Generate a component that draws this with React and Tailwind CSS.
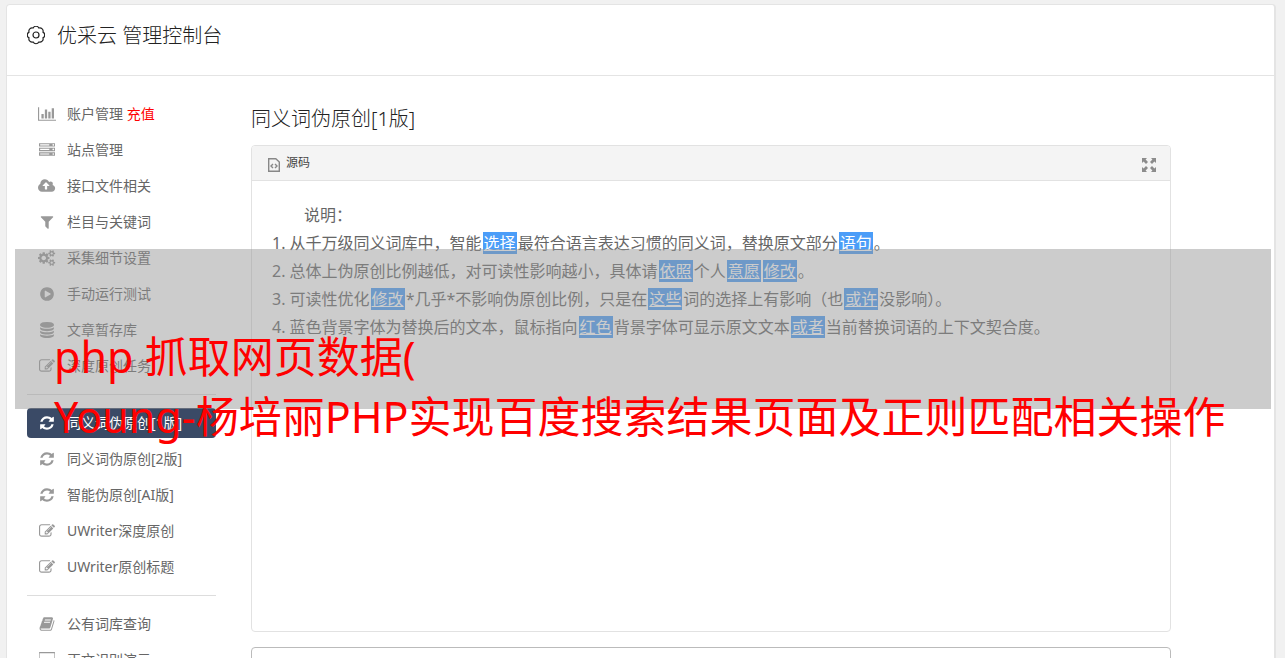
const icons = {
  chart: {
    width: 2048,
    d: "M640 896v512h-256v-512h256zm384-512v1024h-256v-1024h256zm1024 1152v128h-2048v-1536h128v1408h1920zm-640-896v768h-256v-768h256zm384-384v1152h-256v-1152h256z",
  },
  server: {
    width: 1792,
    d: "M128 1408h1024v-128h-1024v128zm0-512h1024v-128h-1024v128zm1568 448q0-40-28-68t-68-28-68 28-28 68 28 68 68 28 68-28 28-68zm-1568-960h1024v-128h-1024v128zm1568 448q0-40-28-68t-68-28-68 28-28 68 28 68 68 28 68-28 28-68zm0-512q0-40-28-68t-68-28-68 28-28 68 28 68 68 28 68-28 28-68zm96 832v384h-1792v-384h1792zm0-512v384h-1792v-384h1792zm0-512v384h-1792v-384h1792z",
  },
  upload: {
    width: 1920,
    d: "M1280 864q0-14-9-23l-352-352q-9-9-23-9t-23 9l-351 351q-10 12-10 24 0 14 9 23t23 9h224v352q0 13 9.5 22.5t22.5 9.5h192q13 0 22.5-9.5t9.5-22.5v-352h224q13 0 22.5-9.5t9.5-22.5zm640 288q0 159-112.5 271.5t-271.5 112.5h-1088q-185 0-316.5-131.5t-131.5-316.5q0-130 70-240t188-165q-2-30-2-43 0-212 150-362t362-150q156 0 285.5 87t188.5 231q71-62 166-62 106 0 181 75t75 181q0 76-41 138 130 31 213.5 135.5t83.5 238.5z",
  },
  filter: {
    width: 1792,
    d: "M1595 295q17 41-14 70l-493 493v742q0 42-39 59-13 5-25 5-27 0-45-19l-256-256q-19-19-19-45v-486l-493-493q-31-29-14-70 17-39 59-39h1280q42 0 59 39z",
  },
  cogs: {
    width: 1920,
    d: "M896 896q0-106-75-181t-181-75-181 75-75 181 75 181 181 75 181-75 75-181zm768 512q0-52-38-90t-90-38-90 38-38 90q0 53 37.5 90.5t90.5 37.5 90.5-37.5 37.5-90.5zm0-1024q0-52-38-90t-90-38-90 38-38 90q0 53 37.5 90.5t90.5 37.5 90.5-37.5 37.5-90.5zm-384 421v185q0 10-7 19.5t-16 10.5l-155 24q-11 35-32 76 34 48 90 115 7 11 7 20 0 12-7 19-23 30-82.5 89.5t-78.5 59.5q-11 0-21-7l-115-90q-37 19-77 31-11 108-23 155-7 24-30 24h-186q-11 0-20-7.5t-10-17.5l-23-153q-34-10-75-31l-118 89q-7 7-20 7-11 0-21-8-144-133-144-160 0-9 7-19 10-14 41-53t47-61q-23-44-35-82l-152-24q-10-1-17-9.5t-7-19.5v-185q0-10 7-19.5t16-10.5l155-24q11-35 32-76-34-48-90-115-7-11-7-20 0-12 7-20 22-30 82-89t79-59q11 0 21 7l115 90q34-18 77-32 11-108 23-154 7-24 30-24h186q11 0 20 7.5t10 17.5l23 153q34 10 75 31l118-89q8-7 20-7 11 0 21 8 144 133 144 160 0 8-7 19-12 16-42 54t-45 60q23 48 34 82l152 23q10 2 17 10.5t7 19.5zm640 533v140q0 16-149 31-12 27-30 52 51 113 51 138 0 4-4 7-122 71-124 71-8 0-46-47t-52-68q-20 2-30 2t-30-2q-14 21-52 68t-46 47q-2 0-124-71-4-3-4-7 0-25 51-138-18-25-30-52-149-15-149-31v-140q0-16 149-31 13-29 30-52-51-113-51-138 0-4 4-7 4-2 35-20t59-34 30-16q8 0 46 46.5t52 67.5q20-2 30-2t30 2q51-71 92-112l6-2q4 0 124 70 4 3 4 7 0 25-51 138 17 23 30 52 149 15 149 31zm0-1024v140q0 16-149 31-12 27-30 52 51 113 51 138 0 4-4 7-122 71-124 71-8 0-46-47t-52-68q-20 2-30 2t-30-2q-14 21-52 68t-46 47q-2 0-124-71-4-3-4-7 0-25 51-138-18-25-30-52-149-15-149-31v-140q0-16 149-31 13-29 30-52-51-113-51-138 0-4 4-7 4-2 35-20t59-34 30-16q8 0 46 46.5t52 67.5q20-2 30-2t30 2q51-71 92-112l6-2q4 0 124 70 4 3 4 7 0 25-51 138 17 23 30 52 149 15 149 31z",
  },
  play: {
    width: 1792,
    d: "M896 128q209 0 385.5 103t279.5 279.5 103 385.5-103 385.5-279.5 279.5-385.5 103-385.5-103-279.5-279.5-103-385.5 103-385.5 279.5-279.5 385.5-103zm384 823q32-18 32-55t-32-55l-544-320q-31-19-64-1-32 19-32 56v640q0 37 32 56 16 8 32 8 17 0 32-9z",
  },
  database: {
    width: 1792,
    d: "M896 768q237 0 443-43t325-127v170q0 69-103 128t-280 93.5-385 34.5-385-34.5-280-93.5-103-128v-170q119 84 325 127t443 43zm0 768q237 0 443-43t325-127v170q0 69-103 128t-280 93.5-385 34.5-385-34.5-280-93.5-103-128v-170q119 84 325 127t443 43zm0-384q237 0 443-43t325-127v170q0 69-103 128t-280 93.5-385 34.5-385-34.5-280-93.5-103-128v-170q119 84 325 127t443 43zm0-1152q208 0 385 34.5t280 93.5 103 128v128q0 69-103 128t-280 93.5-385 34.5-385-34.5-280-93.5-103-128v-128q0-69 103-128t280-93.5 385-34.5z",
  },
  edit: {
    width: 1792,
    d: "M888 1184l116-116-152-152-116 116v56h96v96h56zm440-720q-16-16-33 1l-350 350q-17 17-1 33t33-1l350-350q17-17 1-33zm80 594v190q0 119-84.5 203.5t-203.5 84.5h-832q-119 0-203.5-84.5t-84.5-203.5v-832q0-119 84.5-203.5t203.5-84.5h832q63 0 117 25 15 7 18 23 3 17-9 29l-49 49q-14 14-32 8-23-6-45-6h-832q-66 0-113 47t-47 113v832q0 66 47 113t113 47h832q66 0 113-47t47-113v-126q0-13 9-22l64-64q15-15 35-7t20 29zm-96-738l288 288-672 672h-288v-288zm444 132l-92 92-288-288 92-92q28-28 68-28t68 28l152 152q28 28 28 68t-28 68z",
  },
  refresh: {
    width: 1792,
    d: "M1639 1056q0 5-1 7-64 268-268 434.5t-478 166.5q-146 0-282.5-55t-243.5-157l-129 129q-19 19-45 19t-45-19-19-45v-448q0-26 19-45t45-19h448q26 0 45 19t19 45-19 45l-137 137q71 66 161 102t187 36q134 0 250-65t186-179q11-17 53-117 8-23 30-23h192q13 0 22.5 9.5t9.5 22.5zm25-800v448q0 26-19 45t-45 19h-448q-26 0-45-19t-19-45 19-45l138-138q-148-137-349-137-134 0-250 65t-186 179q-11 17-53 117-8 23-30 23h-199q-13 0-22.5-9.5t-9.5-22.5v-7q65-268 270-434.5t480-166.5q146 0 284 55.5t245 156.5l130-129q19-19 45-19t45 19 19 45z",
  },
  book: {
    width: 1792,
    d: "M1703 478q40 57 18 129l-275 906q-19 64-76.5 107.5t-122.5 43.5h-923q-77 0-148.5-53.5t-99.5-131.5q-24-67-2-127 0-4 3-27t4-37q1-8-3-21.5t-3-19.5q2-11 8-21t16.5-23.5 16.5-23.5q23-38 45-91.5t30-91.5q3-10 .5-30t-.5-28q3-11 17-28t17-23q21-36 42-92t25-90q1-9-2.5-32t.5-28q4-13 22-30.5t22-22.5q19-26 42.5-84.5t27.5-96.5q1-8-3-25.5t-2-26.5q2-8 9-18t18-23 17-21q8-12 16.5-30.5t15-35 16-36 19.5-32 26.5-23.5 36-11.5 47.5 5.5l-1 3q38-9 51-9h761q74 0 114 56t18 130l-274 906q-36 119-71.5 153.5t-128.5 34.5h-869q-27 0-38 15-11 16-1 43 24 70 144 70h923q29 0 56-15.5t35-41.5l300-987q7-22 5-57 38 15 59 43zm-1064 2q-4 13 2 22.5t20 9.5h608q13 0 25.5-9.5t16.5-22.5l21-64q4-13-2-22.5t-20-9.5h-608q-13 0-25.5 9.5t-16.5 22.5zm-83 256q-4 13 2 22.5t20 9.5h608q13 0 25.5-9.5t16.5-22.5l21-64q4-13-2-22.5t-20-9.5h-608q-13 0-25.5 9.5t-16.5 22.5z",
  },
  desktop: {
    width: 1856,
    d: "M1728 992v-832q0-13-9.5-22.5t-22.5-9.5h-1600q-13 0-22.5 9.5t-9.5 22.5v832q0 13 9.5 22.5t22.5 9.5h1600q13 0 22.5-9.5t9.5-22.5zm128-832v1088q0 66-47 113t-113 47h-544q0 37 16 77.5t32 71 16 43.5q0 26-19 45t-45 19h-512q-26 0-45-19t-19-45q0-14 16-44t32-70 16-78h-544q-66 0-113-47t-47-113v-1088q0-66 47-113t113-47h1600q66 0 113 47t47 113z",
  },
};

const menu = [
  [
    { icon: "chart", label: "账户管理", extra: "充值" },
    { icon: "server", label: "站点管理" },
    { icon: "upload", label: "接口文件相关" },
    { icon: "filter", label: "栏目与关键词" },
    { icon: "cogs", label: "采集细节设置" },
    { icon: "play", label: "手动运行测试" },
    { icon: "database", label: "文章暂存库" },
    { icon: "edit", label: "深度原创任务" },
  ],
  [
    { icon: "refresh", label: "同义词伪原创[1版]", active: true },
    { icon: "refresh", label: "同义词伪原创[2版]" },
    { icon: "refresh", label: "智能伪原创[AI版]" },
    { icon: "edit", label: "UWriter深度原创" },
    { icon: "edit", label: "UWriter原创标题" },
  ],
  [
    { icon: "book", label: "公有词库查询" },
    { icon: "desktop", label: "正文识别演示" },
  ],
];

function MenuIcon({ name }) {
  const { width, d } = icons[name];
  return (
    <svg viewBox={`0 0 ${width} 1792`} className="h-4 w-auto" fill="currentColor" aria-hidden="true">
      <path d={d} />
    </svg>
  );
}

function MenuItem({ icon, label, extra, active }) {
  return (
    <a
      href="#"
      className={`flex h-[30px] items-center rounded-sm pl-2.5 text-sm ${active ? 'bg-[#3a4a66] text-white' : 'text-[#666]'}`}
    >
      <span className={`mr-2.5 flex w-5 shrink-0 justify-center ${active ? 'text-white' : 'text-[#999]'}`}>
        <MenuIcon name={icon} />
      </span>
      <span>{label}{extra ? <span className="text-[#f00]"> {extra}</span> : null}</span>
    </a>
  );
}

function Word({ children }) {
  return <a href="#" className="mx-px bg-[#4b9df8] px-px text-white underline">{children}</a>;
}

function Editor() {
  return (
    <section className="h-[487px] overflow-hidden rounded border border-[#e2e2e2] bg-white">
      <div className="flex h-[35px] items-center justify-between border-b border-[#e2e2e2] bg-[#f4f4f4] pr-3.5 pl-4">
        <button className="flex items-center gap-1.5 text-xs text-[#444]">
          <svg viewBox="0 0 12 14" className="mt-1 h-3.5 w-3" fill="none" stroke="#888" aria-hidden="true">
            <path d="M.7.7h7.1L11.3 4v9.3H.7z" strokeWidth="1.4" />
            <path d="M5 6 3 8l2 2M7 6l2 2-2 2" strokeWidth="1.4" />
          </svg>
          源码
        </button>
        <button aria-label="全屏">
          <svg viewBox="0 0 14 14" className="mt-1 size-3.5" fill="#8c8c8c" aria-hidden="true">
            <path d="M0 0h5L3.6 1.6 6 4 4 6 1.6 3.6 0 5zM14 0v5l-1.6-1.4L10 6 8 4l2.4-2.4L9 0zM0 14V9l1.6 1.4L4 8l2 2-2.4 2.4L5 14zM14 14H9l1.4-1.6L8 10l2-2 2.4 2.4L14 9z" />
          </svg>
        </button>
      </div>
      <div className="px-5 py-5 text-base leading-7 text-[#666]">
        <p className="indent-8">说明：</p>
        <p>1. 从千万级同义词库中，智能<Word>选择</Word>最符合语言表达习惯的同义词，替换原文部分<Word>语句</Word>。</p>
        <p>2. 总体上伪原创比例越低，对可读性影响越小，具体请<Word>依照</Word>个人<Word>意愿</Word><Word>修改</Word>。</p>
        <p>3. 可读性优化<Word>修改</Word>*几乎*不影响伪原创比例，只是在<Word>这些</Word>词的选择上有影响（也<Word>或许</Word>没影响）。</p>
        <p>4. 蓝色背景字体为替换后的文本，鼠标指向<Word>红色</Word>背景字体可显示原文文本<Word>或者</Word>当前替换词语的上下文契合度。</p>
      </div>
    </section>
  );
}

export default function App() {
  return (
    <div className="relative h-screen overflow-hidden bg-[#f1f1f1] pt-1 pr-[9px] pl-1.5 font-['Noto_Sans','Noto_Sans_CJK_SC',sans-serif]">
      <div className="rounded-t border border-r-2 border-[#e4e4e4] bg-white">
        <header className="flex h-[71px] items-center gap-3 border-b border-[#e4e4e4] px-5 pb-2 text-[#222]">
          <svg viewBox="1 1 18 20" className="h-5 w-[18px]" fill="none" stroke="currentColor" strokeWidth="1.2" aria-hidden="true">
            <path d="M7.1 3A3.3 3.3 0 0 1 12.9 3 3.3 3.3 0 0 1 17 7.1 3.3 3.3 0 0 1 17 12.9 3.3 3.3 0 0 1 12.9 17 3.3 3.3 0 0 1 7.1 17 3.3 3.3 0 0 1 3 12.9 3.3 3.3 0 0 1 3 7.1 3.3 3.3 0 0 1 7.1 3Z" />
            <circle cx="10" cy="10" r="3" />
          </svg>
          <h1 className="text-xl font-light">优采云 管理控制台</h1>
        </header>
        <div className="flex gap-[35px] pr-[103px] pl-5">
          <aside className="w-[189px] shrink-0 pt-[23px]">
            {menu.map((group, i) => (
              <nav key={i} className={`flex flex-col gap-1.5 ${i > 0 ? 'mt-[13px] border-t border-[#ddd] pt-[13px]' : ''}`}>
                {group.map((item) => <MenuItem key={item.label} {...item} />)}
              </nav>
            ))}
          </aside>
          <main className="min-w-0 flex-1 pt-[29px]">
            <h2 className="mb-3 text-xl font-light text-[#222]">同义词伪原创[1版]</h2>
            <Editor />
            <textarea aria-label="原文" className="mt-[15px] block h-40 w-full resize-none rounded-sm border border-[#bbb] bg-white" />
          </main>
        </div>
      </div>
      <div className="absolute top-[249px] right-3.5 left-[15px] h-40 bg-[#949494]/48">
        <p className="pt-[78px] pl-[39px] text-[43px] leading-[60px] whitespace-nowrap text-[#f00]">
          php 抓取网页数据(
          <br />
          Young-杨培丽PHP实现百度搜索结果页面及正则匹配相关操作
        </p>
      </div>
    </div>
  );
}
